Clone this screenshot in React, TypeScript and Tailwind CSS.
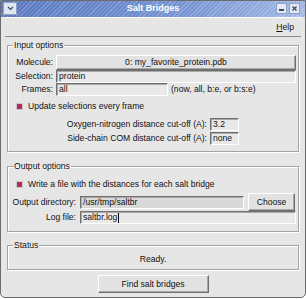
import React from "react";

const sunken =
  "border border-t-[#707070] border-l-[#707070] border-r-white border-b-white shadow-[inset_1px_1px_0_#a9a9a9]";
const raised =
  "border border-t-white border-l-white border-r-[#6f6f6f] border-b-[#6f6f6f] shadow-[inset_-1px_-1px_0_#a8a8a8] bg-[#e2e2e2]";
const groupBox =
  "border border-[#a3a3a3] shadow-[inset_1px_1px_0_#ffffff,1px_1px_0_#ffffff]";

function Check() {
  return <span className="h-[7px] w-[7px] shrink-0 border border-[#c9c9c9] bg-[#b22d5e]" />;
}

function Entry({ value, className = "", cursor = false, dim = false }: { value: string; className?: string; cursor?: boolean; dim?: boolean }) {
  return (
    <div className={`${sunken} ${dim ? "bg-[#d9d9d9]" : "bg-[#e9e9e9]"} flex h-[13px] items-center pl-[2px] leading-none ${className}`}>
      <span>{value}</span>
      {cursor ? <span className="ml-[1px] h-[10px] w-px bg-black" /> : null}
    </div>
  );
}

export default function App() {
  return (
    <div className="h-[299px] w-[306px] bg-white font-['Liberation_Sans',Arial,sans-serif] text-[8.6px] text-[#111]">
      <div className="flex h-[298px] w-[306px] flex-col overflow-hidden rounded-b-[5px] border border-[#6c6c6c] bg-[#e6e6e6]">
        {/* title bar */}
        <div className="relative flex h-[16px] shrink-0 items-center justify-center bg-[image:repeating-linear-gradient(135deg,rgba(255,255,255,0.2)_0px,rgba(255,255,255,0.2)_1px,transparent_1px,transparent_3px),linear-gradient(to_right,#5877c0,#7694d2_60%,#a3b8e4)]">
          <span className="text-[9px] font-bold text-white">Salt Bridges</span>
          <div className="absolute left-[2px] top-[1px] flex h-[13px] w-[14px] items-center justify-center border border-[#8da0c8] bg-[#dfe5f1]">
            <svg width="7" height="5" viewBox="0 0 7 5">
              <path d="M1 1 L3.5 3.5 L6 1" fill="none" stroke="#3a4a6a" strokeWidth="1.2" />
            </svg>
          </div>
          <div className="absolute right-[5px] top-[2px] flex gap-[2px]">
            <div className="flex h-[11px] w-[11px] items-end justify-center border border-[#8da0c8] bg-[#e3e8f2] pb-[2px]">
              <span className="h-[2px] w-[5px] bg-[#3a4a6a]" />
            </div>
            <div className="flex h-[11px] w-[11px] items-center justify-center border border-[#8da0c8] bg-[#e3e8f2]">
              <svg width="7" height="7" viewBox="0 0 7 7">
                <path d="M1.5 1.5 L5.5 5.5 M5.5 1.5 L1.5 5.5" stroke="#3a4a6a" strokeWidth="1.4" />
              </svg>
            </div>
          </div>
        </div>

        {/* menu bar */}
        <div className="mx-[4px] flex h-[20px] shrink-0 items-center justify-end border-t border-t-white border-b border-b-[#8a8a8a] pr-[7px]">
          <span>
            <span className="underline">H</span>elp
          </span>
        </div>

        <div className="flex flex-col px-[6px]">
          {/* input options */}
          <fieldset className={`mt-[3px] px-[2px] pb-[6px] ${groupBox}`}>
            <legend className="ml-[3px] px-[1px] leading-[10px]">Input options</legend>
            <div className="mt-[5px] flex h-[15px] items-center gap-[3px]">
              <span className="w-[43px] text-right">Molecule:</span>
              <div className={`${raised} flex h-[15px] w-[240px] items-center justify-center`}>0: my_favorite_protein.pdb</div>
            </div>
            <div className="flex h-[13px] items-center gap-[3px]">
              <span className="w-[43px] text-right">Selection:</span>
              <Entry value="protein" className="w-[240px]" />
            </div>
            <div className="flex h-[13px] items-center gap-[3px]">
              <span className="w-[43px] text-right">Frames:</span>
              <Entry value="all" className="w-[112px]" />
              <span>(now, all, b:e, or b:s:e)</span>
            </div>
            <div className="mt-[4px] flex h-[12px] items-center gap-[5px] pl-[6px]">
              <Check />
              <span>Update selections every frame</span>
            </div>
            <div className="mt-[6px] flex h-[13px] items-center gap-[3px]">
              <span className="w-[197px] text-right">Oxygen-nitrogen distance cut-off (A):</span>
              <Entry value="3.2" className="w-[29px]" />
            </div>
            <div className="mt-[1px] flex h-[13px] items-center gap-[3px]">
              <span className="w-[197px] text-right">Side-chain COM distance cut-off (A):</span>
              <Entry value="none" className="w-[29px]" />
            </div>
          </fieldset>

          {/* output options */}
          <fieldset className={`mt-[9px] px-[2px] pb-[7px] ${groupBox}`}>
            <legend className="ml-[3px] px-[1px] leading-[10px]">Output options</legend>
            <div className="mt-[7px] flex h-[13px] items-center gap-[5px] pl-[6px]">
              <Check />
              <span>Write a file with the distances for each salt bridge</span>
            </div>
            <div className="mt-[2px] flex h-[18px] items-center gap-[4px]">
              <span className="w-[66px] text-right">Output directory:</span>
              <Entry value="/usr/tmp/saltbr" className="w-[164px]" dim />
              <div className={`${raised} flex h-[18px] w-[47px] items-center justify-center`}>Choose</div>
            </div>
            <div className="flex h-[13px] items-center gap-[4px]">
              <span className="w-[66px] text-right">Log file:</span>
              <Entry value="saltbr.log" className="w-[216px]" cursor />
            </div>
          </fieldset>

          {/* status */}
          <fieldset className={`mt-[8px] px-[2px] pb-[4px] ${groupBox}`}>
            <legend className="ml-[3px] px-[1px] leading-[10px]">Status</legend>
            <div className="mt-[3px] flex h-[12px] items-center justify-center">Ready.</div>
          </fieldset>

          <div className={`${raised} mx-auto mt-[5px] flex h-[18px] w-[111px] items-center justify-center`}>
            Find salt bridges
          </div>
        </div>
      </div>
    </div>
  );
}
